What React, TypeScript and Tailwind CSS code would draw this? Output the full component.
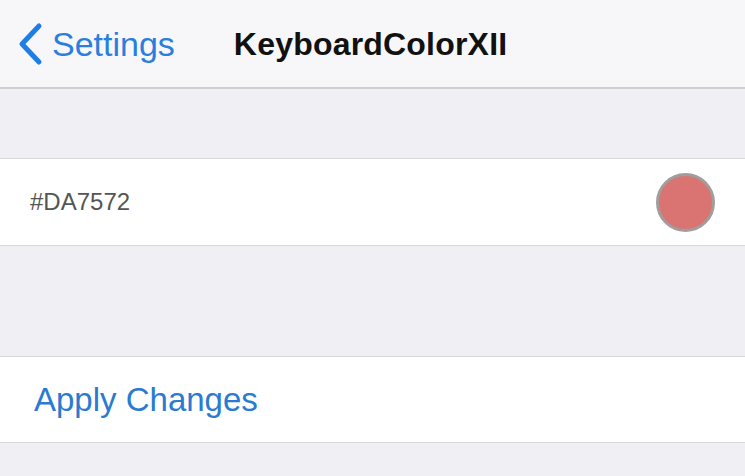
import React from "react";

export default function App() {
  return (
    <div
      className="w-[745px] h-[476px] bg-[#efeff4] overflow-hidden flex flex-col"
      style={{ fontFamily: '"Liberation Sans", Arial, sans-serif' }}
    >
      <div className="h-[89px] shrink-0 bg-[#f7f7f9] border-b-2 border-[#cfcfd3] flex items-center">
        <svg width="30" height="44" viewBox="0 0 30 44" className="ml-[15px]">
          <path d="M24 4 L7 22 L24 40" fill="none" stroke="#1f7ee6" strokeWidth="5" strokeLinecap="round" strokeLinejoin="round" />
        </svg>
        <span className="ml-[7px] text-[34px] text-[#2a7fdc] leading-none">Settings</span>
        <span className="ml-[59px] text-[32px] font-bold text-[#111] leading-none tracking-[0.2px]">KeyboardColorXII</span>
      </div>
      <div className="h-[69px] shrink-0" />
      <div className="h-[88px] shrink-0 bg-white border-y border-[#d8d8dc] flex items-center justify-between pl-[30px] pr-[30px]">
        <span className="text-[24px] text-[#555555] leading-none">#DA7572</span>
        <div className="w-[59px] h-[59px] rounded-full bg-[#d97472] border-[3px] border-[#a39c9c]" />
      </div>
      <div className="h-[110px] shrink-0" />
      <div className="h-[87px] shrink-0 bg-white border-y border-[#d8d8dc] flex items-center pl-[34px]">
        <span className="text-[33px] text-[#2a7bd0] leading-none">Apply Changes</span>
      </div>
    </div>
  );
}
